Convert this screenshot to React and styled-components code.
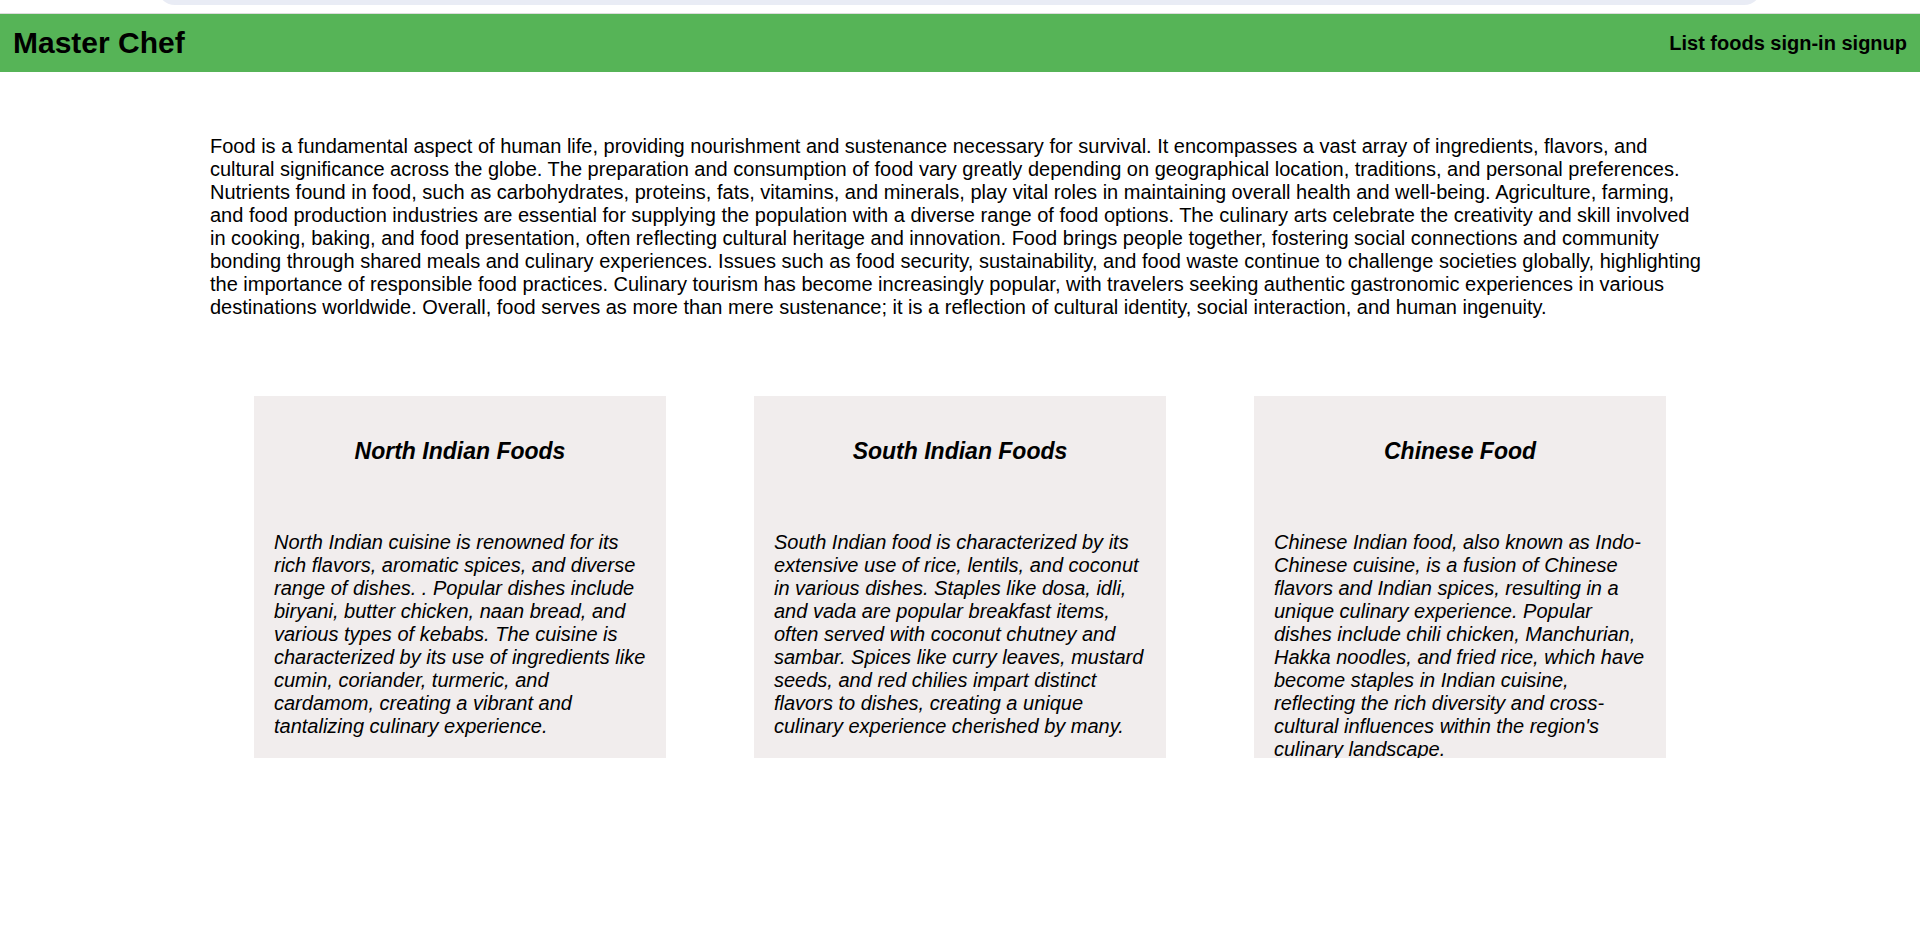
import React from 'react';
import styled, {createGlobalStyle} from 'styled-components';

const GlobalStyle = createGlobalStyle`
body {
    margin: 0;
    background: #ffffff;
    font-family: "Liberation Sans", Arial, sans-serif;
    color: #000;
}
`;

const TopStrip = styled.div`
height: 13px;
display: flex;
justify-content: flex-start;
padding-left: 157px;
background: #fff;
`;
const SearchEdge = styled.div`
width: 1605px;
height: 5px;
overflow: hidden;
display: flex;
align-items: flex-end;
`;
const SearchBox = styled.div`
width: 100%;
height: 40px;
flex-shrink: 0;
background: #e9ecf5;
border-radius: 0 0 18px 18px;
`;

const Header = styled.header`
height: 58px;
border-top: 1px solid #dcdcdc;
background-color: #56b457;
display: flex;
align-items: center;
justify-content: space-between;
padding: 0 13px 0 13px;
`;
const Brand = styled.h1`
margin: 0;
font-size: 30px;
font-weight: bold;
`;
const Nav = styled.nav`
font-size: 20px;
font-weight: bold;
white-space: pre;
`;
const NavLink = styled.a`
color: #000;
text-decoration: none;
cursor: pointer;
`;

const Main = styled.main`
width: 1500px;
margin: 0 auto;
`;
const Intro = styled.p`
margin: 63px 0 0;
font-size: 20px;
line-height: 23px;
`;

const CardRow = styled.section`
display: grid;
grid-template-columns: repeat(3, 500px);
margin-top: 77px;
`;
const Card = styled.article`
box-sizing: border-box;
width: 412px;
height: 362px;
margin: 0 auto;
padding: 20px;
background-color: #f1eded;
font-style: italic;
`;
const CardTitle = styled.h2`
margin: 22px 0 0;
font-size: 23px;
text-align: center;
`;
const CardText = styled.p`
margin: 66px 0 0;
font-size: 20px;
line-height: 23px;
`;

const cuisines = [
    {
        title: 'North Indian Foods',
        text: 'North Indian cuisine is renowned for its rich flavors, aromatic spices, and diverse range of dishes. . Popular dishes include biryani, butter chicken, naan bread, and various types of kebabs. The cuisine is characterized by its use of ingredients like cumin, coriander, turmeric, and cardamom, creating a vibrant and tantalizing culinary experience.'
    },
    {
        title: 'South Indian Foods',
        text: 'South Indian food is characterized by its extensive use of rice, lentils, and coconut in various dishes. Staples like dosa, idli, and vada are popular breakfast items, often served with coconut chutney and sambar. Spices like curry leaves, mustard seeds, and red chilies impart distinct flavors to dishes, creating a unique culinary experience cherished by many.'
    },
    {
        title: 'Chinese Food',
        text: "Chinese Indian food, also known as Indo-Chinese cuisine, is a fusion of Chinese flavors and Indian spices, resulting in a unique culinary experience. Popular dishes include chili chicken, Manchurian, Hakka noodles, and fried rice, which have become staples in Indian cuisine, reflecting the rich diversity and cross-cultural influences within the region's culinary landscape."
    }
];

const App = () => {
    return (
        <>
            <GlobalStyle/>
            <TopStrip>
                <SearchEdge><SearchBox/></SearchEdge>
            </TopStrip>
            <Header>
                <Brand>Master Chef</Brand>
                <Nav>
                    <NavLink>List foods</NavLink> <NavLink>sign-in</NavLink> <NavLink>signup</NavLink>
                </Nav>
            </Header>
            <Main>
                <Intro>
                    Food is a fundamental aspect of human life, providing nourishment and sustenance necessary for survival. It encompasses a vast array of ingredients, flavors, and cultural significance across the globe. The preparation and consumption of food vary greatly depending on geographical location, traditions, and personal preferences. Nutrients found in food, such as carbohydrates, proteins, fats, vitamins, and minerals, play vital roles in maintaining overall health and well-being. Agriculture, farming, and food production industries are essential for supplying the population with a diverse range of food options. The culinary arts celebrate the creativity and skill involved in cooking, baking, and food presentation, often reflecting cultural heritage and innovation. Food brings people together, fostering social connections and community bonding through shared meals and culinary experiences. Issues such as food security, sustainability, and food waste continue to challenge societies globally, highlighting the importance of responsible food practices. Culinary tourism has become increasingly popular, with travelers seeking authentic gastronomic experiences in various destinations worldwide. Overall, food serves as more than mere sustenance; it is a reflection of cultural identity, social interaction, and human ingenuity.
                </Intro>
                <CardRow>
                    {cuisines.map(item => (
                        <Card key={item.title}>
                            <CardTitle>{item.title}</CardTitle>
                            <CardText>{item.text}</CardText>
                        </Card>
                    ))}
                </CardRow>
            </Main>
        </>
    );
};

export default App;
